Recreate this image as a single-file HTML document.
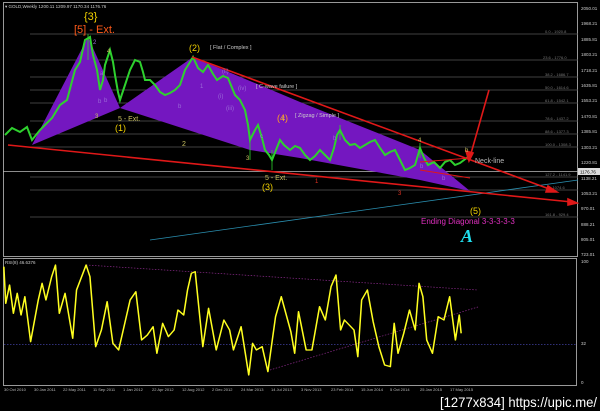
<!DOCTYPE html>
<html><head><meta charset="utf-8"><style>
html,body{margin:0;padding:0;background:#000;}
svg{display:block;font-family:"Liberation Sans",sans-serif;}
</style></head><body>
<svg width="600" height="411" viewBox="0 0 600 411" xmlns="http://www.w3.org/2000/svg">
<rect width="600" height="411" fill="#000"/>
<rect x="3.5" y="2.5" width="574" height="254" fill="none" stroke="#999" stroke-width="1"/>
<rect x="3.5" y="258.5" width="573" height="127" fill="none" stroke="#999" stroke-width="1"/>
<g stroke="#555" stroke-width="0.8">
<line x1="30" y1="34" x2="578" y2="34"/>
<line x1="30" y1="60" x2="578" y2="60"/>
<line x1="30" y1="77" x2="578" y2="77"/>
<line x1="30" y1="90" x2="578" y2="90"/>
<line x1="30" y1="103" x2="578" y2="103"/>
<line x1="30" y1="121" x2="578" y2="121"/>
<line x1="30" y1="134" x2="578" y2="134"/>
<line x1="30" y1="147" x2="578" y2="147"/>
<line x1="30" y1="177" x2="578" y2="177"/>
<line x1="30" y1="190" x2="578" y2="190"/>
<line x1="30" y1="217" x2="578" y2="217"/>
</g>
<line x1="3" y1="171.5" x2="578" y2="171.5" stroke="#bbb" stroke-width="0.8"/>
<g fill="#777" font-size="4">
<text x="545" y="33">0.0 - 1920.8</text>
<text x="543" y="59">23.6 - 1776.0</text>
<text x="545" y="76">38.2 - 1686.7</text>
<text x="545" y="89">50.0 - 1614.6</text>
<text x="545" y="102">61.8 - 1542.1</text>
<text x="545" y="120">78.6 - 1437.2</text>
<text x="545" y="133">88.6 - 1377.3</text>
<text x="545" y="146">100.0 - 1308.3</text>
<text x="545" y="176">127.2 - 1141.9</text>
<text x="550" y="189">- 1074.6</text>
<text x="545" y="216">161.8 - 929.4</text>
</g>
<line x1="150" y1="240" x2="578" y2="180" stroke="#2a8fb0" stroke-width="0.8"/>
<polygon points="32,145 88,37 120,108" fill="#7417c0"/>
<polygon points="120,108 193,57 300,102 420,150 470,191 420,180 300,158 250,150" fill="#7417c0"/>
<polyline fill="none" stroke="#2ed12e" stroke-width="2" points="5,135 12,128 20,132 27,127 32,140 40,130 45,125 52,118 60,105 67,100 75,70 80,62 85,40 90,37 93,55 97,70 100,90 103,80 105,65 110,50 113,62 115,75 118,92 120,100 125,85 130,70 135,60 140,62 143,72 145,80 150,80 155,85 160,92 165,95 170,93 175,90 180,85 185,70 190,62 193,57 198,68 203,72 208,65 213,74 217,80 223,76 228,78 235,95 240,100 245,110 248,125 250,140 255,130 258,125 262,138 265,150 269,155 272,160 276,150 280,140 284,145 290,150 295,146 300,148 305,155 310,160 315,156 320,150 325,155 330,160 334,148 337,135 340,130 345,140 350,145 355,144 360,148 365,145 370,142 375,140 380,148 385,155 390,152 395,150 400,160 405,170 410,168 415,165 418,155 420,148 424,158 428,165 434,162 440,168 445,162 450,160 455,165 460,163 468,157"/>
<g stroke="#2ed12e" stroke-width="0.8">
<line x1="88" y1="34" x2="88" y2="60"/><line x1="250" y1="135" x2="250" y2="160"/><line x1="272" y1="150" x2="272" y2="170"/><line x1="340" y1="125" x2="340" y2="140"/><line x1="420" y1="143" x2="420" y2="158"/>
</g>
<g stroke="#e01818" stroke-width="1.6" fill="#e01818">
<line x1="8" y1="145" x2="572" y2="202"/>
<polygon points="577,203 568,199 568,205"/>
<line x1="192" y1="57" x2="552" y2="190"/>
<polygon points="557,192 548,186 546,192"/>
<line x1="489" y1="90" x2="470" y2="157"/>
<polygon points="469,161 466,151 473,153"/>
<line x1="420" y1="162" x2="470" y2="158" stroke-width="1"/>
<line x1="420" y1="170" x2="470" y2="178" stroke-width="1"/>
</g>
<g font-size="11">
<text x="84" y="20" fill="#f0d000">{3}</text>
<text x="74" y="33" fill="#ff5a1a">[5] - Ext.</text>
<text x="189" y="51" fill="#f0d000" font-size="9">(2)</text>
<text x="115" y="131" fill="#f0d000" font-size="9">(1)</text>
<text x="277" y="121" fill="#ffa020" font-size="9">(4)</text>
<text x="262" y="190" fill="#f0d000" font-size="9">(3)</text>
<text x="470" y="214" fill="#f0d000" font-size="9">(5)</text>
</g>
<g font-size="5.5" fill="#ccc">
<text x="210" y="49">[ Flat / Complex ]</text>
<text x="256" y="88">[ C-wave failure ]</text>
<text x="295" y="117">[ Zigzag / Simple ]</text>
</g>
<g font-size="7" fill="#c8c060">
<text x="118" y="121">5 - Ext.</text>
<text x="182" y="146">2</text>
<text x="265" y="180">5 - Ext.</text>
</g>
<g font-size="6" fill="#9b6ad8">
<text x="93" y="44">2</text><text x="98" y="103">b</text><text x="100" y="75">a</text><text x="104" y="102">b</text><text x="200" y="88">1</text><text x="218" y="98">(i)</text><text x="222" y="73">(ii)</text><text x="226" y="110">(iii)</text><text x="238" y="90">(iv)</text><text x="178" y="108">b</text><text x="260" y="138">c</text><text x="333" y="140">b</text><text x="420" y="168">b</text><text x="442" y="180">b</text>
</g>
<g font-size="6" fill="#c8c060">
<text x="107" y="53">4</text><text x="95" y="118">3</text><text x="246" y="160">3</text><text x="282" y="120">c</text><text x="418" y="142">4</text><text x="465" y="152">b</text>
</g>
<g font-size="6" fill="#e03020"><text x="398" y="195">3</text><text x="315" y="183">1</text></g>
<text x="475" y="163" font-size="7" fill="#bbb">Neck-line</text>
<text x="421" y="224" font-size="8" fill="#e030c0">Ending Diagonal 3-3-3-3-3</text>
<text x="461" y="242" font-size="18" font-style="italic" font-weight="bold" fill="#20e0f0" font-family="Liberation Serif,serif">A</text>
<text x="5" y="8" font-size="4.5" fill="#ccc">▾ GOLD,Weekly   1200.11 1209.97 1170.34 1176.76</text>
<g font-size="4.5" fill="#ccc">
<text x="581" y="10">2050.01</text><text x="581" y="25">1968.21</text><text x="581" y="41">1885.81</text><text x="581" y="56">1803.21</text><text x="581" y="72">1718.21</text><text x="581" y="87">1635.81</text><text x="581" y="102">1553.21</text><text x="581" y="118">1470.81</text><text x="581" y="133">1385.81</text><text x="581" y="149">1303.21</text><text x="581" y="164">1220.81</text><text x="581" y="180">1138.21</text><text x="581" y="195">1053.21</text><text x="581" y="210">970.01</text><text x="581" y="226">888.21</text><text x="581" y="241">805.01</text><text x="581" y="256">723.01</text>
<text x="581" y="263">100</text><text x="581" y="345">32</text><text x="581" y="384">0</text>
</g>
<rect x="578" y="168" width="22" height="7" fill="#ddd"/>
<text x="580" y="173.5" font-size="4.5" fill="#000">1176.76</text>
<text x="5" y="264" font-size="4.5" fill="#ccc">RSI(8) 46.6376</text>
<line x1="4" y1="344.5" x2="576" y2="344.5" stroke="#4040a0" stroke-width="0.7" stroke-dasharray="1.5,1.5"/>
<line x1="86" y1="265" x2="478" y2="290" stroke="#8a2a8a" stroke-width="0.7" stroke-dasharray="1.5,1.5"/>
<line x1="270" y1="370" x2="478" y2="307" stroke="#8a2a8a" stroke-width="0.7" stroke-dasharray="1.5,1.5"/>
<g transform="translate(0,250) scale(0.3827,0.3333)">
<polyline fill="none" stroke="#ffff20" stroke-width="4" stroke-linejoin="round" points="10,50 15,160 25,105 35,190 45,130 55,195 65,140 80,275 100,150 110,100 120,150 135,80 145,45 155,190 170,130 190,265 200,120 225,45 235,80 250,290 265,240 280,155 295,280 310,300 320,250 340,150 355,125 370,270 385,255 400,230 410,310 425,220 440,260 455,240 465,180 480,195 490,120 500,70 510,65 530,290 545,175 565,300 585,210 600,240 610,300 630,230 650,375 660,280 670,300 685,290 700,365 720,200 735,140 760,245 770,310 780,185 800,300 815,300 835,170 850,210 865,110 878,75 890,240 900,210 925,240 935,320 945,150 960,120 975,215 990,290 1005,345 1020,350 1030,220 1040,310 1055,250 1070,180 1085,240 1095,100 1105,140 1115,270 1130,310 1145,200 1160,210 1175,140 1190,270 1200,195 1205,250"/>
</g>
<g font-size="4" fill="#bbb">
<text x="4" y="391">30 Oct 2010</text><text x="34" y="391">30 Jan 2011</text><text x="63" y="391">22 May 2011</text><text x="93" y="391">11 Sep 2011</text><text x="123" y="391">1 Jan 2012</text><text x="152" y="391">22 Apr 2012</text><text x="182" y="391">12 Aug 2012</text><text x="212" y="391">2 Dec 2012</text><text x="241" y="391">24 Mar 2013</text><text x="271" y="391">14 Jul 2013</text><text x="301" y="391">3 Nov 2013</text><text x="331" y="391">23 Feb 2014</text><text x="361" y="391">15 Jun 2014</text><text x="390" y="391">5 Oct 2014</text><text x="420" y="391">25 Jan 2015</text><text x="450" y="391">17 May 2015</text>
</g>
<text x="440" y="407" font-size="14" fill="#fff" textLength="157" lengthAdjust="spacingAndGlyphs">[1277x834] https://upic.me/</text>
</svg>
</body></html>
